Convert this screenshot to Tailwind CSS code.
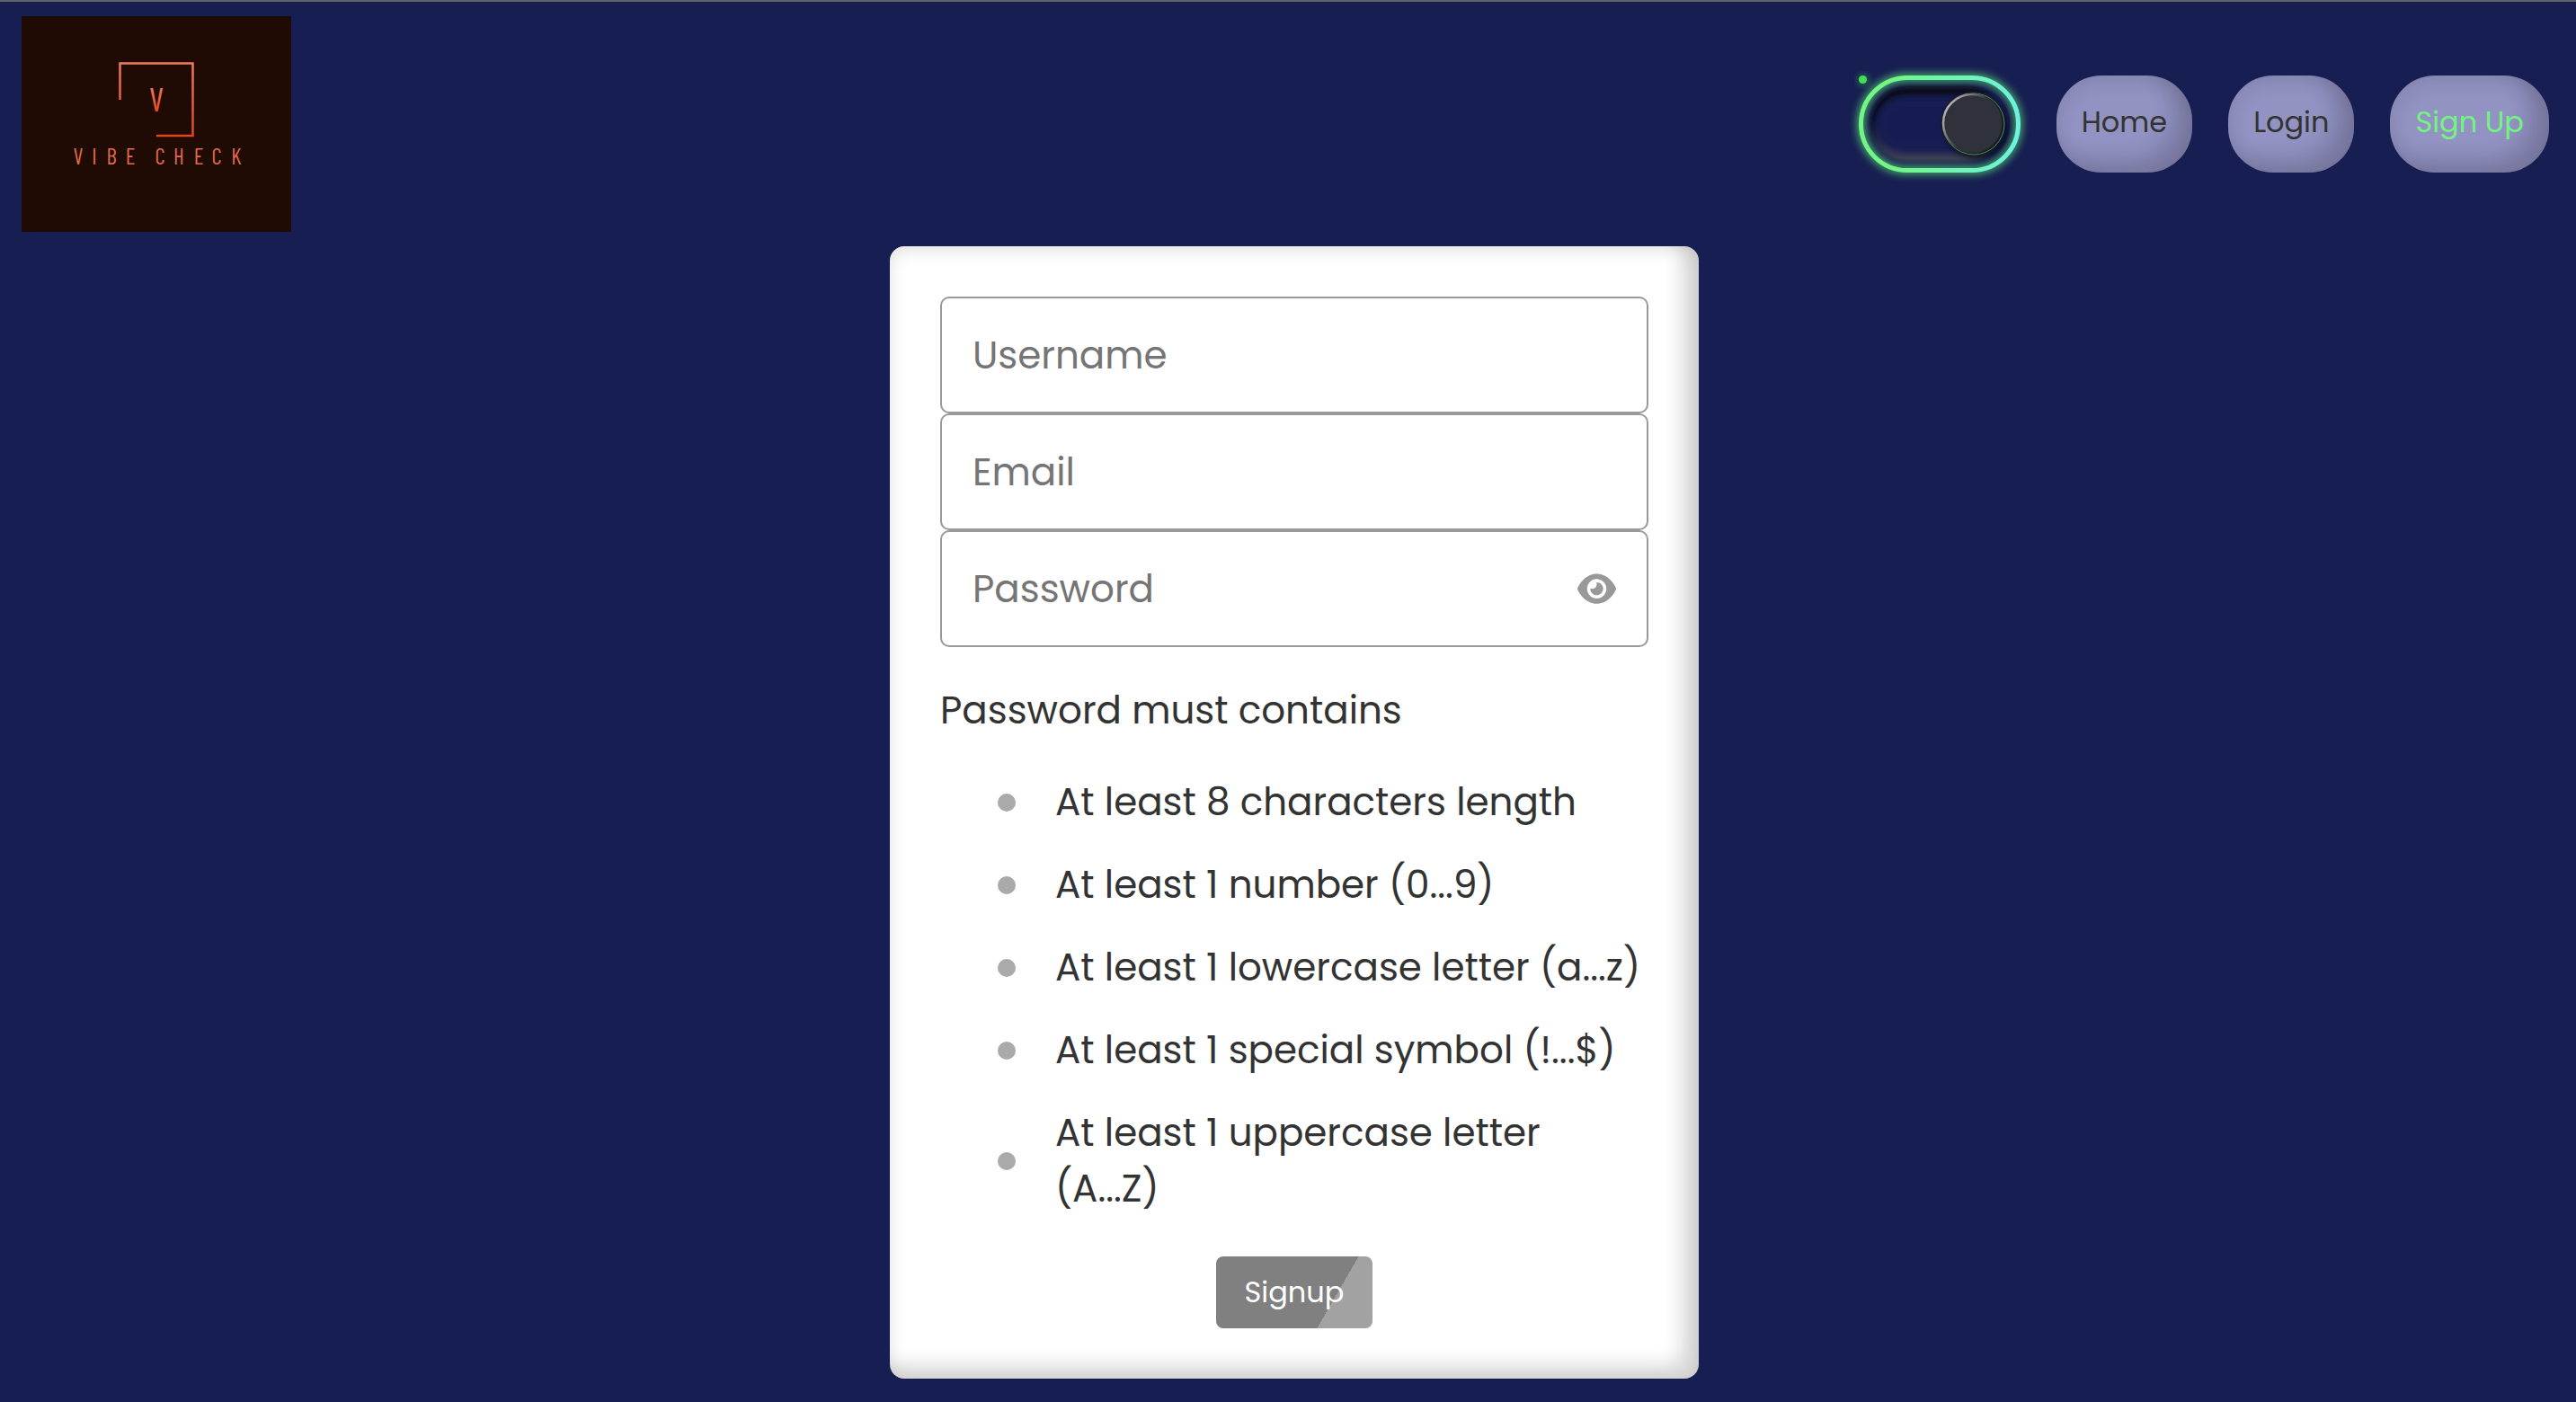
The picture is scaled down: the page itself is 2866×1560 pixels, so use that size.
<!DOCTYPE html>
<html lang="en">
<head>
<meta charset="utf-8">
<meta name="viewport" content="width=device-width, initial-scale=1">
<title>Vibe Check – Sign Up</title>
<script src="https://cdn.jsdelivr.net/npm/@tailwindcss/browser@4"></script>
</head>
<body class="min-h-screen border-t-2 border-[#5f6468] bg-[#171e52] font-[Poppins,Inter,sans-serif] text-[#333]">

<header class="flex items-center justify-between py-4 pl-6 pr-[30px]">
  <a href="#" aria-label="Vibe Check">
    <svg class="h-60 w-[300px]" viewBox="0 0 300 240">
      <defs>
        <linearGradient id="ember" gradientUnits="userSpaceOnUse" x1="0" y1="50" x2="0" y2="135">
          <stop offset="0" stop-color="#ee7d5e"/><stop offset="1" stop-color="#e0441c"/>
        </linearGradient>
        <linearGradient id="emberV" x1="0" y1="0" x2="0" y2="1">
          <stop offset="0.2" stop-color="#ee7d5e"/><stop offset="0.9" stop-color="#e0441c"/>
        </linearGradient>
      </defs>
      <rect width="300" height="240" fill="#1f0b04"/>
      <path d="M109.500 93V52.500H190.500V133H150" fill="none" stroke="url(#ember)" stroke-width="2.500"/>
      <g text-anchor="middle" class="font-['Barlow_Condensed','Roboto_Condensed',sans-serif]">
        <text x="150" y="106" font-size="37" fill="url(#emberV)">V</text>
        <text y="165" x="63 81 100 121 154 175 197 217 239" font-size="25" fill="#e0694a">VIBECHECK</text>
      </g>
    </svg>
  </a>

  <nav class="flex items-center gap-10">
    <label class="relative block h-[108px] w-[180px]">
      <input type="checkbox" checked aria-label="Dark mode" class="block h-full w-full cursor-pointer appearance-none rounded-full">
      <svg class="pointer-events-none absolute inset-0 h-full w-full overflow-visible" viewBox="0 0 180 108" aria-hidden="true">
        <defs>
          <linearGradient id="ring"><stop offset="0.2" stop-color="#72f585"/><stop offset="1" stop-color="#6df2e2"/></linearGradient>
          <linearGradient id="rim" x1="0" y1="0.2" x2="1" y2="0.8"><stop offset="0" stop-color="#c8c8d0"/><stop offset="0.5" stop-color="#2f323a"/></linearGradient>
          <linearGradient id="track" x1="0" y1="0" x2="0" y2="1"><stop offset="0" stop-color="#090b12"/><stop offset="0.45" stop-color="#0d1120"/><stop offset="0.8" stop-color="#36394e"/><stop offset="1" stop-color="#484a56"/></linearGradient>
          <filter id="blur2" x="-30%" y="-30%" width="160%" height="160%"><feGaussianBlur stdDeviation="2"/></filter>
          <filter id="blur4" x="-30%" y="-30%" width="160%" height="160%"><feGaussianBlur stdDeviation="4"/></filter>
          <clipPath id="well"><rect x="10" y="10" width="158" height="88" rx="44"/></clipPath>
        </defs>
        <rect x="2.500" y="2.500" width="175" height="103" rx="51.500" fill="none" stroke="#58d870" stroke-opacity="0.7" stroke-width="10" filter="url(#blur4)"/>
        <rect x="13" y="13" width="150" height="82" rx="41" fill="url(#track)" filter="url(#blur2)"/>
        <g clip-path="url(#well)">
          <rect x="20" y="23" width="160" height="62" rx="31" fill="#171e52" filter="url(#blur4)"/>
          <rect x="22" y="25" width="150" height="58" rx="29" fill="#171e52" filter="url(#blur4)"/>
        </g>
        <circle cx="131" cy="58" r="33" fill="#06070b" opacity="0.9" filter="url(#blur4)"/>
        <circle cx="127" cy="53.500" r="36" fill="#1b1d22"/>
        <circle cx="128" cy="54" r="34" fill="none" stroke="#4a8a66" stroke-width="1"/>
        <circle cx="126" cy="53" r="32" fill="#2f323a" stroke="url(#rim)" stroke-width="2.500"/>
        <rect x="2.500" y="2.500" width="175" height="103" rx="51.500" fill="none" stroke="url(#ring)" stroke-width="5"/>
        <circle cx="5" cy="5" r="6" fill="#3be050" opacity="0.5" filter="url(#blur4)"/>
        <circle cx="4.500" cy="4.500" r="4.500" fill="#45e052"/>
      </svg>
    </label>
    <a href="#" class="flex h-[108px] items-center rounded-[50px] bg-[#9292c3] px-7 pb-1 text-[32px] shadow-[inset_-20px_-14px_24px_rgba(0,0,0,0.16),inset_0_4px_24px_rgba(0,0,0,0.1)]">Home</a>
    <a href="#" class="flex h-[108px] items-center rounded-[50px] bg-[#9292c3] px-7 pb-1 text-[32px] shadow-[inset_-20px_-14px_24px_rgba(0,0,0,0.16),inset_0_4px_24px_rgba(0,0,0,0.1)]">Login</a>
    <a href="#" class="flex h-[108px] items-center rounded-[50px] bg-[#9292c3] px-7 pb-1 text-[32px] text-[#72f580] shadow-[inset_-20px_-14px_24px_rgba(0,0,0,0.16),inset_0_4px_24px_rgba(0,0,0,0.1)]">Sign Up</a>
  </nav>
</header>

<main class="flex justify-center pl-[14px]">
  <form class="w-full max-w-[900px] rounded-2xl bg-white p-14 text-[42px] leading-[62px] shadow-[inset_-20px_-16px_20px_rgba(0,0,0,0.14),inset_0_4px_20px_rgba(0,0,0,0.12)]">
    <input type="text" placeholder="Username" aria-label="Username" class="block h-[130px] w-full rounded-[10px] border-2 border-[#999] bg-white px-[34px] placeholder:text-[#757575]">
    <input type="email" placeholder="Email" aria-label="Email" class="block h-[130px] w-full rounded-[10px] border-2 border-[#999] bg-white px-[34px] placeholder:text-[#757575]">
    <div class="relative">
      <input type="password" placeholder="Password" aria-label="Password" class="block h-[130px] w-full rounded-[10px] border-2 border-[#999] bg-white pl-[34px] pr-24 placeholder:text-[#757575]">
      <button type="button" aria-label="Show password" class="absolute inset-y-0 right-9 flex items-center text-[#999]">
        <svg class="w-[43px]" viewBox="0 0 576 512" fill="currentColor"><path d="M288 32c-80.8 0-145.500 36.8-192.600 80.600C48.600 156 17.300 208 2.500 243.700c-3.300 7.900-3.300 16.700 0 24.600C17.300 304 48.600 356 95.400 399.400C142.500 443.200 207.200 480 288 480s145.500-36.800 192.600-80.600c46.800-43.500 78.100-95.400 93-131.100c3.300-7.900 3.300-16.700 0-24.600c-14.900-35.700-46.200-87.700-93-131.100C433.500 68.800 368.800 32 288 32zM144 256a144 144 0 1 1 288 0 144 144 0 1 1 -288 0zm144-64c0 35.300-28.700 64-64 64c-7.100 0-13.900-1.200-20.300-3.300c-5.500-1.800-11.900 1.600-11.700 7.400c.3 6.900 1.300 13.800 3.200 20.700c13.700 51.200 66.400 81.600 117.600 67.900s81.600-66.400 67.900-117.600c-11.100-41.500-47.800-69.400-88.600-71.100c-5.800-.2-9.200 6.100-7.400 11.700c2.100 6.400 3.300 13.200 3.300 20.300z"/></svg>
      </button>
    </div>

    <p class="mt-10">Password must contains</p>
    <ul class="mt-10 flex flex-col gap-[30px] pl-16">
      <li class="flex items-center gap-11"><span class="size-5 shrink-0 rounded-full bg-[#aaa]"></span>At least 8 characters length</li>
      <li class="flex items-center gap-11"><span class="size-5 shrink-0 rounded-full bg-[#aaa]"></span>At least 1 number (0...9)</li>
      <li class="flex items-center gap-11"><span class="size-5 shrink-0 rounded-full bg-[#aaa]"></span>At least 1 lowercase letter (a...z)</li>
      <li class="flex items-center gap-11"><span class="size-5 shrink-0 rounded-full bg-[#aaa]"></span>At least 1 special symbol (!...$)</li>
      <li class="flex items-center gap-11"><span class="size-5 shrink-0 rounded-full bg-[#aaa]"></span>At least 1 uppercase letter (A...Z)</li>
    </ul>

    <button type="submit" class="mx-auto mt-11 block h-20 rounded-lg bg-[linear-gradient(120deg,#808080_72%,#a2a2a2_72%)] px-8 text-[32px] leading-none text-white">Signup</button>
  </form>
</main>

</body>
</html>
